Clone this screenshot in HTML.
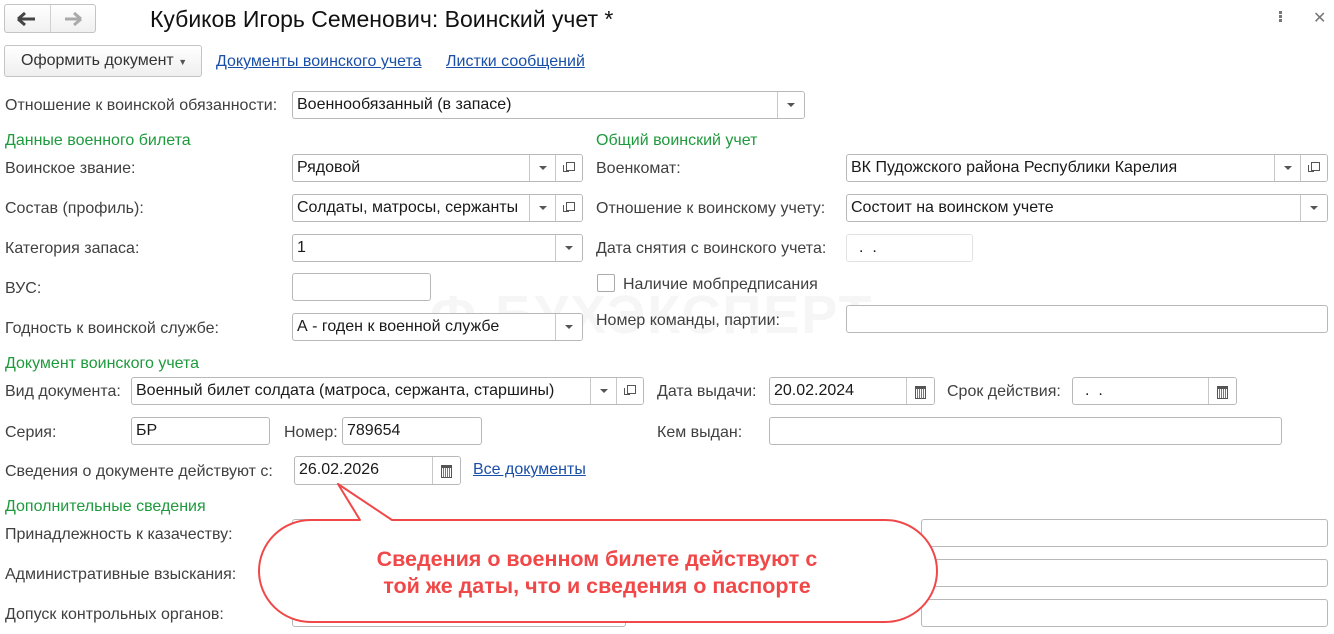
<!DOCTYPE html>
<html><head><meta charset="utf-8"><style>
body{margin:0;width:1334px;height:634px;background:#fff;position:relative;overflow:hidden;font-family:"Liberation Sans",Arial,sans-serif;font-size:16px;color:#404040}
.a{position:absolute;white-space:nowrap}
.l{position:absolute;white-space:nowrap;line-height:18px;margin-top:2px}
.g{color:#1e9a3c}
.f{position:absolute;border:1px solid #b8b8b8;border-radius:3px;background:#fff;box-sizing:border-box;color:#1a1a1a;line-height:26px;padding-left:4px;overflow:hidden;white-space:nowrap}
.b{position:absolute;top:0;bottom:0;width:26px;border-left:1px solid #c8c8c8;background:#fff}
.dd::after{content:"";position:absolute;left:9px;top:11px;border-left:4px solid transparent;border-right:4px solid transparent;border-top:4px solid #555}
.op::after{content:"";position:absolute;left:10px;top:7px;width:7px;height:7px;border:1px solid #555}
.op::before{content:"";position:absolute;left:7px;top:10px;width:5px;height:6px;border-left:1px solid #555;border-bottom:1px solid #555}
.cal::after{content:"";position:absolute;left:8px;top:8px;width:9px;height:9px;border:1px solid #555;border-top:3px solid #555;background:repeating-linear-gradient(90deg,#fff 0 1px,#777 1px 2px)}
a{color:#1a4fa8;text-decoration:underline}
</style></head><body>
<div class="a" style="left:4px;top:4px;width:92px;height:29px;border:1px solid #c4c4c4;border-radius:3px;box-sizing:border-box;background:linear-gradient(#fff,#f0f0f0)"></div>
<div class="a" style="left:50px;top:5px;width:1px;height:27px;background:#d0d0d0"></div>
<svg class="a" style="left:16px;top:11px" width="22" height="16"><path d="M2 8H19M2 8L9 2M2 8L9 14" stroke="#444" stroke-width="3" fill="none"/></svg>
<svg class="a" style="left:62px;top:11px" width="22" height="16"><path d="M3 8H19M19 8L12 2M19 8L12 14" stroke="#aaa" stroke-width="3" fill="none"/></svg>
<div class="a" style="left:150px;top:6px;font-size:23px;color:#111">Кубиков Игорь Семенович: Воинский учет *</div>
<div class="a" style="left:1279px;top:11px;width:3px;height:3px;background:#777;box-shadow:0 4px #777,0 8px #777"></div>
<div class="a" style="left:1313px;top:8px;font-size:16px;color:#777">✕</div>

<div class="a" style="left:4px;top:45px;width:198px;height:32px;border:1px solid #c4c4c4;border-radius:3px;box-sizing:border-box;background:linear-gradient(#fff,#efefef);color:#333;line-height:30px;padding-left:16px">Оформить документ <span style="font-size:9px;color:#555">▼</span></div>
<a class="a" style="left:216px;top:53px">Документы воинского учета</a>
<a class="a" style="left:446px;top:53px">Листки сообщений</a>

<div class="l" style="left:5px;top:95px">Отношение к воинской обязанности:</div>
<div class="f" style="left:292px;top:91px;width:513px;height:28px">Военнообязанный (в запасе)<div class="b dd" style="right:0"></div></div>

<div class="l g" style="left:5px;top:130px">Данные военного билета</div>
<div class="l g" style="left:596px;top:130px">Общий воинский учет</div>

<div class="a" style="left:430px;top:284px;font-size:54px;font-weight:bold;color:#f6f6f6;letter-spacing:2px">Ф БУХЭКСПЕРТ</div>

<div class="l" style="left:5px;top:158px">Воинское звание:</div>
<div class="f" style="left:292px;top:154px;width:291px;height:28px">Рядовой<div class="b dd" style="right:26px"></div><div class="b op" style="right:0"></div></div>
<div class="l" style="left:5px;top:198px">Состав (профиль):</div>
<div class="f" style="left:292px;top:194px;width:291px;height:28px">Солдаты, матросы, сержанты<div class="b dd" style="right:26px"></div><div class="b op" style="right:0"></div></div>
<div class="l" style="left:5px;top:238px">Категория запаса:</div>
<div class="f" style="left:292px;top:234px;width:291px;height:28px">1<div class="b dd" style="right:0"></div></div>
<div class="l" style="left:5px;top:278px">ВУС:</div>
<div class="f" style="left:292px;top:273px;width:139px;height:28px"></div>
<div class="l" style="left:5px;top:318px">Годность к воинской службе:</div>
<div class="f" style="left:292px;top:313px;width:291px;height:28px">А - годен к военной службе<div class="b dd" style="right:0"></div></div>

<div class="l" style="left:596px;top:158px">Военкомат:</div>
<div class="f" style="left:846px;top:154px;width:482px;height:28px">ВК Пудожского района Республики Карелия<div class="b dd" style="right:26px"></div><div class="b op" style="right:0"></div></div>
<div class="l" style="left:596px;top:198px">Отношение к воинскому учету:</div>
<div class="f" style="left:846px;top:194px;width:482px;height:28px">Состоит на воинском учете<div class="b dd" style="right:0"></div></div>
<div class="l" style="left:596px;top:238px">Дата снятия с воинского учета:</div>
<div class="f" style="left:846px;top:234px;width:127px;height:28px;border-color:#e2e2e2;padding-left:12px">.&nbsp;&nbsp;.</div>
<div class="a" style="left:597px;top:274px;width:18px;height:18px;border:1px solid #aaa;border-radius:2px;box-sizing:border-box"></div>
<div class="l" style="left:623px;top:274px">Наличие мобпредписания</div>
<div class="l" style="left:596px;top:310px">Номер команды, партии:</div>
<div class="f" style="left:846px;top:305px;width:482px;height:28px"></div>

<div class="l g" style="left:5px;top:353px">Документ воинского учета</div>
<div class="l" style="left:5px;top:381px">Вид документа:</div>
<div class="f" style="left:131px;top:377px;width:513px;height:28px">Военный билет солдата (матроса, сержанта, старшины)<div class="b dd" style="right:26px"></div><div class="b op" style="right:0"></div></div>
<div class="l" style="left:657px;top:381px">Дата выдачи:</div>
<div class="f" style="left:769px;top:377px;width:166px;height:28px">20.02.2024<div class="b cal" style="right:0;width:27px"></div></div>
<div class="l" style="left:947px;top:381px">Срок действия:</div>
<div class="f" style="left:1072px;top:377px;width:165px;height:28px;padding-left:12px">.&nbsp;&nbsp;.<div class="b cal" style="right:0;width:27px"></div></div>

<div class="l" style="left:5px;top:422px">Серия:</div>
<div class="f" style="left:131px;top:417px;width:139px;height:28px">БР</div>
<div class="l" style="left:284px;top:422px">Номер:</div>
<div class="f" style="left:342px;top:417px;width:140px;height:28px">789654</div>
<div class="l" style="left:657px;top:422px">Кем выдан:</div>
<div class="f" style="left:769px;top:417px;width:513px;height:28px"></div>

<div class="l" style="left:5px;top:461px">Сведения о документе действуют с:</div>
<div class="f" style="left:294px;top:456px;width:167px;height:29px">26.02.2026<div class="b cal" style="right:0;width:27px"></div></div>
<a class="a" style="left:473px;top:461px">Все документы</a>

<div class="l g" style="left:5px;top:496px">Дополнительные сведения</div>
<div class="l" style="left:5px;top:524px">Принадлежность к казачеству:</div>
<div class="l" style="left:5px;top:564px">Административные взыскания:</div>
<div class="l" style="left:5px;top:604px">Допуск контрольных органов:</div>
<div class="f" style="left:292px;top:519px;width:334px;height:28px"></div>
<div class="f" style="left:292px;top:599px;width:334px;height:28px"></div>
<div class="f" style="left:921px;top:519px;width:407px;height:28px"></div>
<div class="f" style="left:921px;top:559px;width:407px;height:28px"></div>
<div class="f" style="left:921px;top:599px;width:407px;height:28px"></div>

<svg class="a" style="left:0;top:0" width="1334" height="634">
<path d="M392 520 L885 520 A52 51 0 0 1 885 622 L311 622 A52 51 0 0 1 311 520 L360 520 L338 484 Z" fill="#fff" stroke="#f04848" stroke-width="2" stroke-linejoin="round"/>
<text x="597" y="566" text-anchor="middle" font-family="Liberation Sans, Arial, sans-serif" font-size="21.5" font-weight="bold" fill="#f04848">Сведения о военном билете действуют с</text>
<text x="597" y="593" text-anchor="middle" font-family="Liberation Sans, Arial, sans-serif" font-size="21.5" font-weight="bold" fill="#f04848">той же даты, что и сведения о паспорте</text>
</svg>
</body></html>
